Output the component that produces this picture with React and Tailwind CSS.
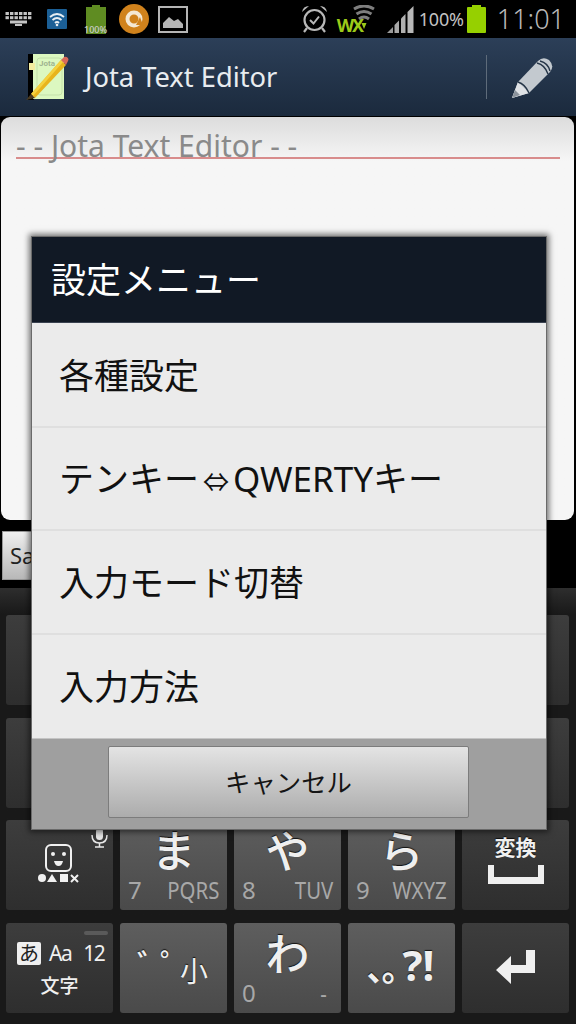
const font = { fontFamily: '"Noto Sans", "Noto Sans CJK JP", sans-serif' };

const StatusBar = () => {
  return (
    <div className="h-[38px] bg-black flex items-center shrink-0">
      {/* keyboard */}
      <svg className="ml-[5px]" width="27" height="14" viewBox="0 0 27 14">
        <g fill="#c4c4c4">
          {[0, 1, 2, 3, 4, 5].map((i) => (
            <rect key={i} x={i * 4.5 + 0.5} y="0" width="3.4" height="3" />
          ))}
          {[0, 1, 2, 3, 4, 5].map((i) => (
            <rect key={i} x={i * 4.5 + 0.5} y="4.2" width="3.4" height="3" />
          ))}
          <rect x="5" y="8.5" width="17" height="3" />
          <rect x="10" y="12" width="7" height="2" />
        </g>
      </svg>
      {/* wifi tile */}
      <svg className="ml-[15px]" width="20" height="20" viewBox="0 0 20 20">
        <rect width="20" height="20" fill="#1b5f96" rx="1" />
        <path d="M3 8 Q10 2 17 8 M5.5 11 Q10 7 14.5 11 M8 14 Q10 12 12 14" fill="none" stroke="#e8eef2" strokeWidth="1.8" />
        <circle cx="10" cy="16" r="1.3" fill="#e8eef2" />
      </svg>
      {/* battery with text */}
      <div className="ml-[19px] w-[20px] h-[29px] relative">
        <div className="w-[8px] h-[2px] mx-auto bg-[#5f8c22]" />
        <div className="w-[20px] h-[27px] bg-[#5f8c22]" />
        <span className="absolute left-[-2px] bottom-[-1px] text-[9px] leading-[10px] text-[#cfcfcf] font-medium">100%</span>
      </div>
      {/* orange circle */}
      <svg className="ml-[13px]" width="30" height="30" viewBox="0 0 30 30">
        <circle cx="15" cy="15" r="15" fill="#d0821c" />
        <circle cx="15" cy="15" r="6.5" fill="none" stroke="#f4e8d4" strokeWidth="4" />
        <path d="M21 13 L24 21 L17 21 Z" fill="#d0821c" />
      </svg>
      {/* image */}
      <svg className="ml-[9px]" width="30" height="27" viewBox="0 0 30 27">
        <rect x="1" y="1" width="28" height="25" fill="none" stroke="#b5b5b5" strokeWidth="2" />
        <path d="M5 22 V17 L11 11 L16 15 L20 13 L25 18 V22 Z" fill="#b5b5b5" />
      </svg>
      <div className="flex-1" />
      {/* alarm */}
      <svg width="27" height="28" viewBox="0 0 27 28">
        <circle cx="13.5" cy="15" r="10" fill="none" stroke="#b8b8b8" strokeWidth="2.2" />
        <path d="M9 15 L12.5 18.5 L18 11.5" fill="none" stroke="#b8b8b8" strokeWidth="2" />
        <path d="M1 7 Q2 1 8 1 Z M26 7 Q25 1 19 1 Z" fill="#b8b8b8" />
        <path d="M6 23 L3 27 M21 23 L24 27" stroke="#b8b8b8" strokeWidth="2.2" />
      </svg>
      <span className="ml-[9px] mt-[12px] w-[20px] text-[18px] leading-[18px] font-bold text-[#9ccb19] tracking-[-2px] whitespace-nowrap">WX</span>
      {/* wifi fan */}
      <svg className="ml-[-4px] mb-[3px]" width="22" height="25" viewBox="0 0 22 25">
        <path d="M1 4 Q11 -2 21 4 M3.5 9 Q11 4 18.5 9 M6 14 Q11 10 16 14" fill="none" stroke="#7e7e7e" strokeWidth="3" />
        <path d="M8.5 18 H13.5 L11 24 Z" fill="#9ccb19" />
      </svg>
      {/* signal */}
      <svg className="ml-[12px]" width="27" height="27" viewBox="0 0 27 27">
        <path d="M0 27 L6 21 V27 Z" fill="#9a9a9a" />
        <path d="M7.5 19 L12 14.5 V27 H7.5 Z" fill="#a8a8a8" />
        <path d="M14 12.5 L18.5 8 V27 H14 Z" fill="#b0b0b0" />
        <path d="M20.5 6 L26.5 0 V27 H20.5 Z" fill="#b8b8b8" />
      </svg>
      <span className="ml-[5px] text-[18px] leading-[20px] text-[#c2c2c2] tracking-[-0.2px]">100%</span>
      <div className="ml-[3px] w-[19px] h-[28px] mb-[1px]">
        <div className="w-[9px] h-[2px] mx-auto bg-[#96d000]" />
        <div className="w-[19px] h-[26px] bg-[#96d000] rounded-[1px]" />
      </div>
      <span className="ml-[11px] mr-[11px] text-[27px] leading-[28px] text-[#b9b9b9] font-light">11:01</span>
    </div>
  );
};

const ActionBar = () => {
  return (
    <div className="h-[78px] shrink-0 flex items-center bg-gradient-to-b from-[#2c3f58] to-[#1b2a3d]">
      {/* app icon */}
      <svg className="ml-[25px]" width="46" height="48" viewBox="0 0 46 48">
        <rect x="3" y="1" width="6" height="46" fill="#000" />
        <rect x="8" y="1" width="31" height="45" fill="#dcf8c0" />
        <rect x="12" y="5" width="25" height="37" rx="3" fill="none" stroke="#c4e0aa" strokeWidth="1" />
        <text x="14" y="13" fontSize="8" fontWeight="700" fill="#9fb490" fontFamily="Roboto, sans-serif">Jota</text>
        <rect x="4" y="10" width="6" height="7" fill="#f2eca0" />
        <path d="M6 41 L36 7 L41 12 L10 45 Z" fill="#e8b41c" />
        <path d="M6 41 L36 7 L38 9 L8 43 Z" fill="#f4d23f" />
        <path d="M36 7 L39 4 Q41 3 43 5 Q44 7 43 8 L41 12 Z" fill="#d86a5a" />
        <path d="M6 41 L10 45 L1 47 Z" fill="#4a3a20" />
      </svg>
      <span className="ml-[14px] text-[27.3px] text-[#e8ecf0]">Jota Text Editor</span>
      <div className="flex-1" />
      <div className="w-[1px] h-[44px] bg-[#5e6b7a]" />
      {/* edit pencil */}
      <svg className="ml-[24px] mr-[22px]" width="43" height="43" viewBox="0 0 43 43">
        <path d="M1 42 L7 26 L27 5 Q32 0 38 4 Q44 10 39 16 L18 37 Z" fill="#c3c9cf" />
        <path d="M1 42 L7 26 L18 37 Z" fill="#dfe2e6" />
        <path d="M1 42 L4 34 L9 39 Z" fill="#8b939c" />
        <path d="M7 26 Q14 28 18 37" fill="none" stroke="#253547" strokeWidth="1.4" />
        <path d="M26 7 Q34 9 37 18 M29 5 Q37 7 39 15" fill="none" stroke="#253547" strokeWidth="1.4" />
      </svg>
    </div>
  );
};

const Editor = () => {
  return (
    <div className="flex-1 bg-black flex flex-col">
      <div className="flex-1 ml-[1px] mr-[2px] mt-[1px] rounded-[9px] bg-gradient-to-b from-[#dcdcdc] via-[#f6f6f6] via-[11%] to-[#f6f6f6] pl-[15px] pr-[14px] pt-[12px]">
        <div className="h-[30px] border-b-[2px] border-[#d88c8c] text-[30px] leading-[33px] text-[#8a8a8a] whitespace-nowrap">
          - - Jota Text Editor - -
        </div>
      </div>
      <div className="h-[68px] shrink-0 pt-[11px] pl-[2px]">
        <div className="w-[60px] h-[49px] border border-[#999] bg-gradient-to-b from-[#f0f0f0] to-[#b8b8b8] flex items-center pl-[7px] text-[22px] text-[#222]">
          Sa
        </div>
      </div>
    </div>
  );
};

const shadowText = "[text-shadow:0_-1px_1px_#111]";

const LightKey = ({ kana, num, letters }) => {
  return (
    <div className="h-[90px] rounded-[3px] bg-gradient-to-b from-[#5e5e5e] to-[#4a4a4a] flex flex-col items-center">
      <div className={`h-[62px] flex items-center text-[44px] leading-[44px] text-[#efefef] font-medium ${shadowText}`}>
        {kana}
      </div>
      <div className="w-full mt-[-6px] px-[8px] flex justify-between items-center text-[24px] leading-[28px] text-[#a8a8a8]">
        <span>{num}</span>
        <span className="origin-right scale-x-[0.85]">{letters}</span>
      </div>
    </div>
  );
};

const DarkKey = ({ children }) => {
  return <div className="h-[90px] rounded-[3px] bg-gradient-to-b from-[#3d3d3d] to-[#2e2e2e]">{children}</div>;
};

const FaceKey = () => {
  return (
    <DarkKey>
      <div className="h-full flex flex-col items-center relative">
        {/* mic, half under the dialog */}
        <svg className="absolute right-[5px] top-[8px]" width="17" height="20" viewBox="0 0 17 20">
          <rect x="5" y="0" width="7" height="12" rx="3.5" fill="#e8e8e8" />
          <path d="M1 7 Q1 15 8.5 15 Q16 15 16 7" fill="none" stroke="#e8e8e8" strokeWidth="1.5" />
          <path d="M8.5 15 V19 M4 19 H13" stroke="#e8e8e8" strokeWidth="1.5" />
        </svg>
        <svg className="mt-[24px] mr-[1px]" width="44" height="40" viewBox="0 0 44 40">
          <rect x="9" y="1" width="25" height="26" rx="5" fill="none" stroke="#f0f0f0" strokeWidth="2" />
          <circle cx="16" cy="10" r="2" fill="#f0f0f0" />
          <circle cx="27" cy="10" r="2" fill="#f0f0f0" />
          <path d="M17 17 H26 Q25 22 21.5 22 Q18 22 17 17 Z" fill="#f0f0f0" />
          <circle cx="5" cy="34" r="4" fill="#f0f0f0" />
          <path d="M10 38 L15 30 L20 38 Z" fill="#f0f0f0" />
          <rect x="23" y="30" width="8" height="8" fill="#f0f0f0" />
          <path d="M34 31 L41 38 M41 31 L34 38" stroke="#f0f0f0" strokeWidth="2" />
        </svg>
      </div>
    </DarkKey>
  );
};

const ModeKey = () => {
  return (
    <DarkKey>
      <div className="h-full flex flex-col relative">
        <div className="absolute right-[5px] top-[8px] w-[24px] h-[4px] rounded-[2px] bg-[#5a5a5a]" />
        <div className="pt-[19px] pl-[11px] flex items-center text-[#f0f0f0]">
          <span className="w-[24px] h-[23px] rounded-[2px] bg-[#efefef] text-[#222] text-[20px] leading-[23px] text-center">あ</span>
          <span className="ml-[8px] text-[21px] leading-[23px] tracking-[-1.5px]">Aa</span>
          <span className="ml-[12px] text-[21px] leading-[23px] tracking-[-1.5px]">12</span>
        </div>
        <div className="mt-[9px] text-center text-[19px] leading-[24px] text-[#f0f0f0] font-medium">文字</div>
      </div>
    </DarkKey>
  );
};

const SmallKey = () => {
  return (
    <div className="h-[90px] rounded-[3px] bg-gradient-to-b from-[#5e5e5e] to-[#4a4a4a] flex pl-[17px]">
      <div className={`mt-[24px] w-[43px] text-[32px] leading-[36px] text-[#efefef] font-medium tracking-[-9px] ${shadowText}`}>゛゜</div>
      <div className={`mt-[31px] text-[28px] leading-[34px] text-[#efefef] ${shadowText}`}>小</div>
    </div>
  );
};

const PunctKey = () => {
  return (
    <div className="h-[90px] rounded-[3px] bg-gradient-to-b from-[#5e5e5e] to-[#4a4a4a] flex items-center justify-center pr-[2px]">
      <span className={`text-[34px] leading-[46px] text-[#efefef] font-bold tracking-[-2px] ${shadowText}`}>、。</span>
      <span className={`ml-[-11px] mb-[5px] text-[42px] leading-[46px] text-[#efefef] font-bold ${shadowText}`}>?!</span>
    </div>
  );
};

const SpaceKey = () => {
  return (
    <DarkKey>
      <div className="h-full flex flex-col items-center">
        <span className={`mt-[13px] text-[21px] leading-[28px] text-[#f0f0f0] font-bold ${shadowText}`}>変換</span>
        <svg className="mt-[4px]" width="56" height="19" viewBox="0 0 56 19">
          <path d="M0 0 H6 V12 H50 V0 H56 V19 H0 Z" fill="#efefef" />
        </svg>
      </div>
    </DarkKey>
  );
};

const EnterKey = () => {
  return (
    <DarkKey>
      <div className="h-full flex items-center justify-center">
        <svg width="40" height="35" viewBox="0 0 40 35">
          <path d="M30 0 H39 V23 H15 V34 L0 20 L15 6 V15 H30 Z" fill="#efefef" />
        </svg>
      </div>
    </DarkKey>
  );
};

const Keyboard = () => {
  return (
    <div className="h-[436px] shrink-0 bg-gradient-to-b from-[#2e2e2e] via-[#191919] via-[6%] to-[#191919] pt-[27px] pl-[6px] pr-[7px]">
      <div className="grid grid-cols-5 gap-x-[7px] gap-y-[12.6px]">
        <DarkKey />
        <div className="h-[90px] bg-[#555]" />
        <div className="h-[90px] bg-[#555]" />
        <div className="h-[90px] bg-[#555]" />
        <DarkKey />
        <DarkKey />
        <div className="h-[90px] bg-[#555]" />
        <div className="h-[90px] bg-[#555]" />
        <div className="h-[90px] bg-[#555]" />
        <DarkKey />
        <FaceKey />
        <LightKey kana="ま" num="7" letters="PQRS" />
        <LightKey kana="や" num="8" letters="TUV" />
        <LightKey kana="ら" num="9" letters="WXYZ" />
        <SpaceKey />
        <ModeKey />
        <SmallKey />
        <LightKey kana="わ" num="0" letters={<span className="mr-[7px]">-</span>} />
        <PunctKey />
        <EnterKey />
      </div>
    </div>
  );
};

const MenuItem = ({ label, last }) => {
  return (
    <div className={`h-[103.6px] flex items-center pl-[27px] pt-[2px] text-[35px] text-[#111] ${last ? "" : "border-b-[2px] border-[#dfdfdf]"}`}>
      {label}
    </div>
  );
};

const Dialog = () => {
  return (
    <div className="absolute left-[31px] top-[236px] w-[516px] h-[594px] border border-[#6a6a6a] flex flex-col shadow-[0_0_6px_2px_rgba(0,0,0,0.55)]">
      <div className="h-[86px] shrink-0 bg-[#111925] flex items-center pl-[19px] pt-[2px] text-[35px] text-white border-b border-[#3a4250]">
        設定メニュー
      </div>
      <div className="h-[415px] shrink-0 pt-[1px] bg-[#ebebeb]">
        <MenuItem label="各種設定" />
        <MenuItem
          label={
            <span>
              テンキー<span className="mx-[4px] text-[26px]">⇔</span>QWERTYキー
            </span>
          }
        />
        <MenuItem label="入力モード切替" />
        <MenuItem label="入力方法" last />
      </div>
      <div className="flex-1 bg-[#9f9f9f] border-t border-[#c4c4c4] flex items-center justify-center pb-[4px] pr-[1px]">
        <div className="w-[361px] h-[72px] border border-[#7c7c7c] rounded-[2px] bg-gradient-to-b from-[#e4e4e4] to-[#acacac] flex items-center justify-center text-[25.4px] text-[#151515]">
          キャンセル
        </div>
      </div>
    </div>
  );
};

const App = () => {
  return (
    <div className="w-[576px] h-[1024px] relative overflow-hidden bg-black flex flex-col" style={font}>
      <StatusBar />
      <ActionBar />
      <Editor />
      <Keyboard />
      <Dialog />
    </div>
  );
};

export default App;
